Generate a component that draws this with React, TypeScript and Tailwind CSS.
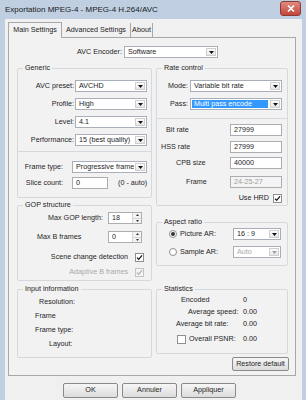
import React from "react";

const font = { fontFamily: '"Liberation Sans", Arial, sans-serif' };

function Arrow({ grey }: { grey?: boolean }) {
  return (
    <svg width="5" height="3" viewBox="0 0 5 3">
      <path d="M0 0h5L2.5 3z" fill={grey ? "#a0a0a0" : "#111"} />
    </svg>
  );
}

function Select({ value, w, hl, disabled }: { value: string; w: string; hl?: boolean; disabled?: boolean }) {
  return (
    <div className={`${w} h-[12px] flex border border-[#a9afb8] bg-white`}>
      <div className="flex-1 min-w-0 flex items-center p-px overflow-hidden">
        <span
          className={
            hl
              ? "h-full flex items-center px-[2px] w-full bg-[#3399ff] text-white"
              : disabled
              ? "px-[2px] text-[#a8a8a8]"
              : "px-[2px]"
          }
        >
          {value}
        </span>
      </div>
      <div className="w-[10px] shrink-0 m-px border border-[#cfcfcf] bg-gradient-to-b from-[#fdfdfd] to-[#e6e6e6] flex items-center justify-center">
        <Arrow grey={disabled} />
      </div>
    </div>
  );
}

function Field({ value, w, disabled }: { value: string; w: string; disabled?: boolean }) {
  return (
    <div
      className={`${w} h-[12px] flex items-center px-[3px] border border-[#abadb3] ${
        disabled ? "bg-[#f4f4f4] text-[#a0a0a0]" : "bg-white"
      }`}
    >
      {value}
    </div>
  );
}

function Spin({ value }: { value: string }) {
  return (
    <div className="w-[34px] h-[12px] flex border border-[#abadb3] bg-white">
      <div className="flex-1 flex items-center px-[3px]">{value}</div>
      <div className="w-[9px] flex flex-col border-l border-[#d6d6d6]">
        <div className="flex-1 flex items-center justify-center bg-[#f3f3f3] border-b border-[#d6d6d6]">
          <svg width="3" height="2" viewBox="0 0 3 2">
            <path d="M0 2h3L1.5 0z" fill="#333" />
          </svg>
        </div>
        <div className="flex-1 flex items-center justify-center bg-[#f3f3f3]">
          <svg width="3" height="2" viewBox="0 0 3 2">
            <path d="M0 0h3L1.5 2z" fill="#333" />
          </svg>
        </div>
      </div>
    </div>
  );
}

function Check({ on, grey }: { on?: boolean; grey?: boolean }) {
  return (
    <div
      className={`w-[9px] h-[9px] flex items-center justify-center border ${
        grey ? "border-[#c4c4c4] bg-[#f4f4f4]" : "border-[#8e8f8f] bg-white"
      }`}
    >
      {on && (
        <svg width="7" height="7" viewBox="0 0 7 7">
          <path d="M1 3.6l1.7 1.7L6 1.4" stroke={grey ? "#b0b0b0" : "#1a1a1a"} strokeWidth="1.3" fill="none" />
        </svg>
      )}
    </div>
  );
}

function Radio({ on }: { on?: boolean }) {
  return (
    <div className="w-[8px] h-[8px] rounded-full border border-[#8e8f8f] bg-white flex items-center justify-center">
      {on && <div className="w-[4px] h-[4px] rounded-full bg-[#333]" />}
    </div>
  );
}

function Group({ title, h, cls, children }: { title: string; h: string; cls?: string; children: React.ReactNode }) {
  return (
    <div className={`relative ${h} ${cls ?? ""} border border-[#d5d9dd] rounded-[2px] flex flex-col`}>
      <span className="absolute -top-[6px] left-[5px] px-[2px] bg-[#f2f2f2] leading-[10px]">{title}</span>
      {children}
    </div>
  );
}

function Btn({ label, w }: { label: string; w: string }) {
  return (
    <div className={`${w} h-[15px] flex items-center justify-center rounded-[2px] border border-[#8a8a8a] bg-gradient-to-b from-[#f6f6f6] to-[#dcdcdc]`}>
      {label}
    </div>
  );
}

export default function App() {
  return (
    <div style={font} className="w-[306px] h-[400px] overflow-hidden whitespace-nowrap bg-[#bfcfe1] text-[7.2px] text-[#1e1e1e]">
      {/* title bar */}
      <div className="h-[19px] flex items-center pl-[5px]">
        <span className="text-[8px] text-[#1a1a1a]">Exportation MPEG-4 - MPEG-4 H.264/AVC</span>
        <div className="ml-auto mr-[5px] -mt-[2px] w-[21px] h-[15px] rounded-[3px] border border-[#8c3a33] bg-gradient-to-b from-[#e08a7e] to-[#c1453a] flex items-center justify-center">
          <svg width="8" height="7" viewBox="0 0 8 7">
            <path d="M1 0.5l6 6M7 0.5l-6 6" stroke="#fff" strokeWidth="1.6" />
          </svg>
        </div>
      </div>

      {/* client area */}
      <div className="ml-[5px] w-[297px] h-[381px] bg-[#f0f0f0]">
        {/* tabs */}
        <div className="ml-[3px] pt-[3px] flex h-[18px] items-end">
          <div className="relative z-10 w-[54px] h-[16px] -mb-px flex items-center justify-center border border-b-0 border-[#a8a8a8] bg-[#f2f2f2]">
            Main Settings
          </div>
          <div className="w-[69px] h-[14px] flex items-center justify-center border-r border-[#a8a8a8]">
            Advanced Settings
          </div>
          <div className="w-[22px] h-[14px] flex items-center justify-center border-r border-[#a8a8a8]">About</div>
        </div>

        {/* tab panel */}
        <div className="ml-[3px] w-[288px] h-[339px] border border-[#a8a8a8] bg-[#f2f2f2] flex flex-col">
          <div className="mt-[8px] flex items-center h-[12px]">
            <span className="w-[113px] text-right">AVC Encoder:</span>
            <div className="ml-[2px]">
              <Select value="Software" w="w-[94px]" />
            </div>
          </div>

          <div className="mt-[10px] ml-[8px] flex gap-[4px]">
            {/* left column */}
            <div className="w-[135px] flex flex-col">
              <Group title="Generic" h="h-[130px]">
                <div className="pt-[11px] flex flex-col gap-[6px]">
                  {[
                    ["AVC preset:", "AVCHD"],
                    ["Profile:", "High"],
                    ["Level:", "4.1"],
                    ["Performance:", "15 (best quality)"],
                  ].map(([l, v]) => (
                    <div key={l} className="h-[12px] flex items-center">
                      <span className="w-[56px] text-right">{l}</span>
                      <div className="ml-px">
                        <Select value={v} w="w-[72px]" />
                      </div>
                    </div>
                  ))}
                </div>
                <div className="mt-[5px] h-px bg-[#d5d9dd]" />
                <div className="mt-[9px] h-[12px] flex items-center">
                  <span className="w-[45px] text-right">Frame type:</span>
                  <div className="ml-[9px]">
                    <Select value="Progressive frame" w="w-[75px]" />
                  </div>
                </div>
                <div className="mt-[4px] h-[12px] flex items-center">
                  <span className="w-[45px] text-right">Slice count:</span>
                  <div className="ml-[9px]">
                    <Field value="0" w="w-[36px]" />
                  </div>
                  <span className="ml-[10px]">(0 - auto)</span>
                </div>
              </Group>

              <Group title="GOP structure" h="h-[76px]" cls="mt-[7px]">
                <div className="mt-[6px] h-[12px] flex items-center">
                  <span className="w-[85px] text-right">Max GOP length:</span>
                  <div className="ml-[5px]">
                    <Spin value="18" />
                  </div>
                </div>
                <div className="mt-[7px] h-[12px] flex items-center">
                  <span className="w-[90px] pl-[19px]">Max B frames</span>
                  <Spin value="0" />
                </div>
                <div className="mt-[9px] h-[10px] flex items-center">
                  <span className="w-[110px] text-right">Scene change detection</span>
                  <div className="ml-[7px]">
                    <Check on />
                  </div>
                </div>
                <div className="mt-[5px] h-[10px] flex items-center">
                  <span className="w-[110px] text-right text-[#a8a8a8]">Adaptive B frames</span>
                  <div className="ml-[7px]">
                    <Check on grey />
                  </div>
                </div>
              </Group>

              <Group title="Input information" h="h-[69px]" cls="mt-[8px]">
                <div className="pt-[7px] flex flex-col gap-[4px]">
                  <div className="h-[10px] flex items-center pl-[21px]">Resolution:</div>
                  <div className="h-[10px] flex items-center pl-[17px]">Frame</div>
                  <div className="h-[10px] flex items-center pl-[17px]">Frame type:</div>
                  <div className="h-[10px] flex items-center pl-[31px]">Layout:</div>
                </div>
              </Group>
            </div>

            {/* right column */}
            <div className="w-[132px] flex flex-col">
              <Group title="Rate control" h="h-[138px]">
                <div className="pt-[11px] flex flex-col gap-[6px]">
                  <div className="h-[12px] flex items-center">
                    <span className="w-[31px] text-right">Mode:</span>
                    <div className="ml-[2px]">
                      <Select value="Variable bit rate" w="w-[92px]" />
                    </div>
                  </div>
                  <div className="h-[12px] flex items-center">
                    <span className="w-[31px] text-right">Pass:</span>
                    <div className="ml-[2px]">
                      <Select value="Multi pass encode" w="w-[92px]" hl />
                    </div>
                  </div>
                </div>
                <div className="mt-[8px] h-px bg-[#d5d9dd]" />
                <div className="mt-[5px] h-[12px] flex items-center">
                  <span className="w-[73px] pl-[9px]">Bit rate</span>
                  <Field value="27999" w="w-[52px]" />
                </div>
                <div className="mt-[5px] h-[12px] flex items-center">
                  <span className="w-[73px] pl-[4px]">HSS rate</span>
                  <Field value="27999" w="w-[52px]" />
                </div>
                <div className="mt-[4px] h-[12px] flex items-center">
                  <span className="w-[73px] pl-[19px]">CPB size</span>
                  <Field value="40000" w="w-[52px]" />
                </div>
                <div className="mt-[7px] h-[12px] flex items-center">
                  <span className="w-[73px] pl-[29px]">Frame</span>
                  <Field value="24-25-27" w="w-[52px]" disabled />
                </div>
                <div className="mt-[5px] h-[10px] flex items-center justify-end pr-[5px]">
                  <span>Use HRD</span>
                  <div className="ml-[4px]">
                    <Check on />
                  </div>
                </div>
              </Group>

              <Group title="Aspect ratio" h="h-[44px]" cls="mt-[16px]">
                <div className="mt-[5px] h-[12px] flex items-center">
                  <div className="w-[76px] flex items-center pl-[12px]">
                    <Radio on />
                    <span className="ml-[3px]">Picture AR:</span>
                  </div>
                  <Select value="16 : 9" w="w-[48px]" />
                </div>
                <div className="mt-[6px] h-[12px] flex items-center">
                  <div className="w-[76px] flex items-center pl-[12px]">
                    <Radio />
                    <span className="ml-[3px]">Sample AR:</span>
                  </div>
                  <Select value="Auto" w="w-[48px]" disabled />
                </div>
              </Group>

              <Group title="Statistics" h="h-[65px]" cls="mt-[23px]">
                <div className="mt-[5px] h-[10px] flex items-center">
                  <span className="w-[86px] pl-[24px]">Encoded</span>
                  <span>0</span>
                </div>
                <div className="mt-[2px] h-[10px] flex items-center">
                  <span className="w-[86px] pl-[31px]">Average speed:</span>
                  <span>0.00</span>
                </div>
                <div className="mt-[2px] h-[10px] flex items-center">
                  <span className="w-[86px] pl-[19px]">Average bit rate:</span>
                  <span>0.00</span>
                </div>
                <div className="mt-[5px] h-[10px] flex items-center">
                  <div className="w-[86px] flex items-center pl-[20px]">
                    <Check />
                    <span className="ml-[3px]">Overall PSNR:</span>
                  </div>
                  <span>0.00</span>
                </div>
              </Group>

              <div className="mt-[3px] ml-[76px]">
                <div className="w-[57px] h-[14px] flex items-center justify-center rounded-[2px] border border-[#8a8a8a] bg-gradient-to-b from-[#f6f6f6] to-[#dcdcdc]">
                  Restore default
                </div>
              </div>
            </div>
          </div>
        </div>

        {/* dialog buttons */}
        <div className="mt-[7px] ml-[58px] flex gap-[4px]">
          <Btn label="OK" w="w-[55px]" />
          <Btn label="Annuler" w="w-[55px]" />
          <Btn label="Appliquer" w="w-[55px]" />
        </div>
      </div>
    </div>
  );
}
